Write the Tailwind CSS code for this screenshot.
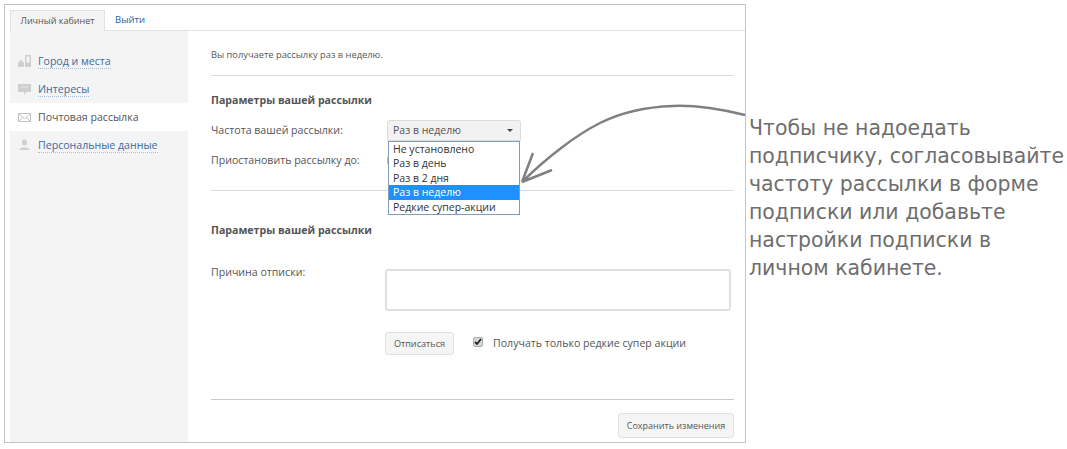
<!DOCTYPE html>
<html><head><meta charset="utf-8"><script src="https://cdn.jsdelivr.net/npm/@tailwindcss/browser@4"></script></head>
<body class="bg-white">
<div class="relative w-[1067px] h-[449px] overflow-hidden font-['Open_Sans',sans-serif] text-[10.600px] text-[#555] pt-[4px] pl-[4px]">
  <div class="w-[742px] h-[439px] border border-[#c4c4c4] pt-[5px] pl-[5px] flex flex-col">
    <div class="flex h-[21px] shrink-0 border-b border-[#e2e2e2] relative">
      <div class="w-[95px] h-[21px] bg-[#f4f4f4] border border-b-0 border-[#e2e2e2] flex items-center justify-center text-[9px] text-[#555] z-10">Личный кабинет</div>
      <a class="ml-[10px] text-[#2a5f9e] text-[9.500px] leading-[20px]">Выйти</a>
    </div>
    <div class="flex flex-1 min-h-0">
      <div class="w-[178px] shrink-0 bg-[#f4f4f4] pt-[16px]">
        <div class="h-[28px] flex items-center pl-[8px] gap-[7px]">
          <svg width="13" height="14" viewBox="0 0 13 14" fill="#cfcfcf"><path d="M0 8h2V6h2v2h2v5H0zM7 1h6v12H7z"/><path d="M8.500 2.500h3v6h-3z" fill="#f4f4f4"/></svg>
          <span class="text-[#3b6b9e] border-b border-dotted border-[#a9bfd6] leading-[13px] pt-[2px]">Город и места</span>
        </div>
        <div class="h-[28px] flex items-center pl-[8px] gap-[7px]">
          <svg width="13" height="13" viewBox="0 0 13 13" fill="#cfcfcf"><path d="M0 1h13v8H8l-2 3V9H0z"/><path d="M3 3.500h7v1H3z" fill="#e4e4e4"/></svg>
          <span class="text-[#3b6b9e] border-b border-dotted border-[#a9bfd6] leading-[13px] pt-[2px]">Интересы</span>
        </div>
        <div class="h-[28px] flex items-center pl-[8px] gap-[7px] bg-white">
          <svg width="13" height="13" viewBox="0 0 13 13" fill="none" stroke="#c4c4c4"><path d="M.5 2.500h12v8H.5zM.5 2.500l6 5 6-5M.5 10.500l4.500-4.500M12.500 10.500l-4.500-4.500"/></svg>
          <span class="pt-[2px]">Почтовая рассылка</span>
        </div>
        <div class="h-[28px] flex items-center pl-[8px] gap-[7px]">
          <svg width="13" height="13" viewBox="0 0 13 13" fill="#cfcfcf"><ellipse cx="6.500" cy="3.500" rx="2.500" ry="3"/><path d="M1.500 11c0-2 3-2.500 5-2.500s5 .5 5 2.500z"/></svg>
          <span class="text-[#3b6b9e] border-b border-dotted border-[#a9bfd6] leading-[13px] pt-[2px]">Персональные данные</span>
        </div>
      </div>
      <div class="w-[546px] pl-[23px] flex flex-col">
        <div class="h-[45px] border-b border-[#dcdcdc] pt-[17px] text-[9.300px] leading-[14px] text-[#555]">Вы получаете рассылку раз в неделю.</div>
        <div class="font-bold mt-[17px] leading-[14px]">Параметры вашей рассылки</div>
        <div class="flex mt-[13px] h-[21px] items-center relative">
          <span class="w-[176px]">Частота вашей рассылки:</span>
          <div class="relative w-[134px] h-[21px] bg-[#f2f2f2] border border-[#dcdcdc] rounded-t-[3px] flex items-center pl-[5px] justify-between pr-[7px] text-[10.500px]">Раз в неделю
            <span class="w-0 h-0 border-x-[3px] border-x-transparent border-t-[3px] border-t-[#444]"></span>
            <div class="absolute left-[-1px] top-[36px] w-px h-[7px] bg-[#bbb]"></div>
            <div class="absolute left-[0px] top-[20px] w-[132px] bg-white border border-[#7f9db9] text-[#333] leading-[14.400px] z-10 text-[10.500px]">
              <div class="pl-[4px]">Не установлено</div>
              <div class="pl-[4px]">Раз в день</div>
              <div class="pl-[4px]">Раз в 2 дня</div>
              <div class="pl-[4px] bg-[#1e90ff] text-white">Раз в неделю</div>
              <div class="pl-[4px]">Редкие супер-акции</div>
            </div>
          </div>
        </div>
        <div class="mt-[12px] h-[14px] leading-[14px]">Приостановить рассылку до:</div>
        <div class="mt-[23px] border-t border-[#dcdcdc] h-0"></div>
        <div class="font-bold mt-[32px] leading-[14px]">Параметры вашей рассылки</div>
        <div class="flex mt-[32px]">
          <span class="w-[174px] mt-[-4px] leading-[14px]">Причина отписки:</span>
          <div class="w-[346px] h-[42px] border-2 border-[#e0e0e0] rounded-[3px] bg-white"></div>
        </div>
        <div class="flex items-center mt-[21px] ml-[174px] h-[23px]">
          <div class="h-[23px] w-[69px] bg-[#f5f5f5] border border-[#e0e0e0] rounded-[3px] flex items-center justify-center text-[9.100px]">Отписаться</div>
          <div class="ml-[19px] w-[10px] h-[10px] bg-[#d8d8d8] border border-[#aaa] rounded-[2px] -mt-[3px] flex items-center justify-center"><svg width="8" height="8" viewBox="0 0 8 8" fill="none" stroke="#222" stroke-width="1.800"><path d="M1 4l2 2 4-5"/></svg></div>
          <span class="ml-[10px]">Получать только редкие супер акции</span>
        </div>
        <div class="mt-[44px] border-t border-[#c8c8c8] h-0"></div>
        <div class="flex justify-end mt-[13px]">
          <div class="w-[116px] h-[25px] bg-[#f5f5f5] border border-[#e0e0e0] rounded-[3px] flex items-center justify-center text-[9px]">Сохранить изменения</div>
        </div>
      </div>
    </div>
  </div>
  <svg class="absolute left-[515px] top-[100px]" width="235" height="90" viewBox="515 100 235 90" fill="none" stroke="#808080" stroke-width="2.500"><path d="M745 115C720 109 695 105 673 106C645 107 622 112 600 123C578 134 548 156 522 182M522 182L533 153M522 182L552 170"/></svg>
  <div class="absolute left-[749px] top-[114px] w-[318px] font-['DejaVu_Sans',sans-serif] text-[20.450px] leading-[28px] text-[#6e6e6e]">Чтобы не надоедать<br>подписчику, согласовывайте<br>частоту рассылки в форме<br>подписки или добавьте<br>настройки подписки в<br>личном кабинете.</div>
</div>
</body></html>
